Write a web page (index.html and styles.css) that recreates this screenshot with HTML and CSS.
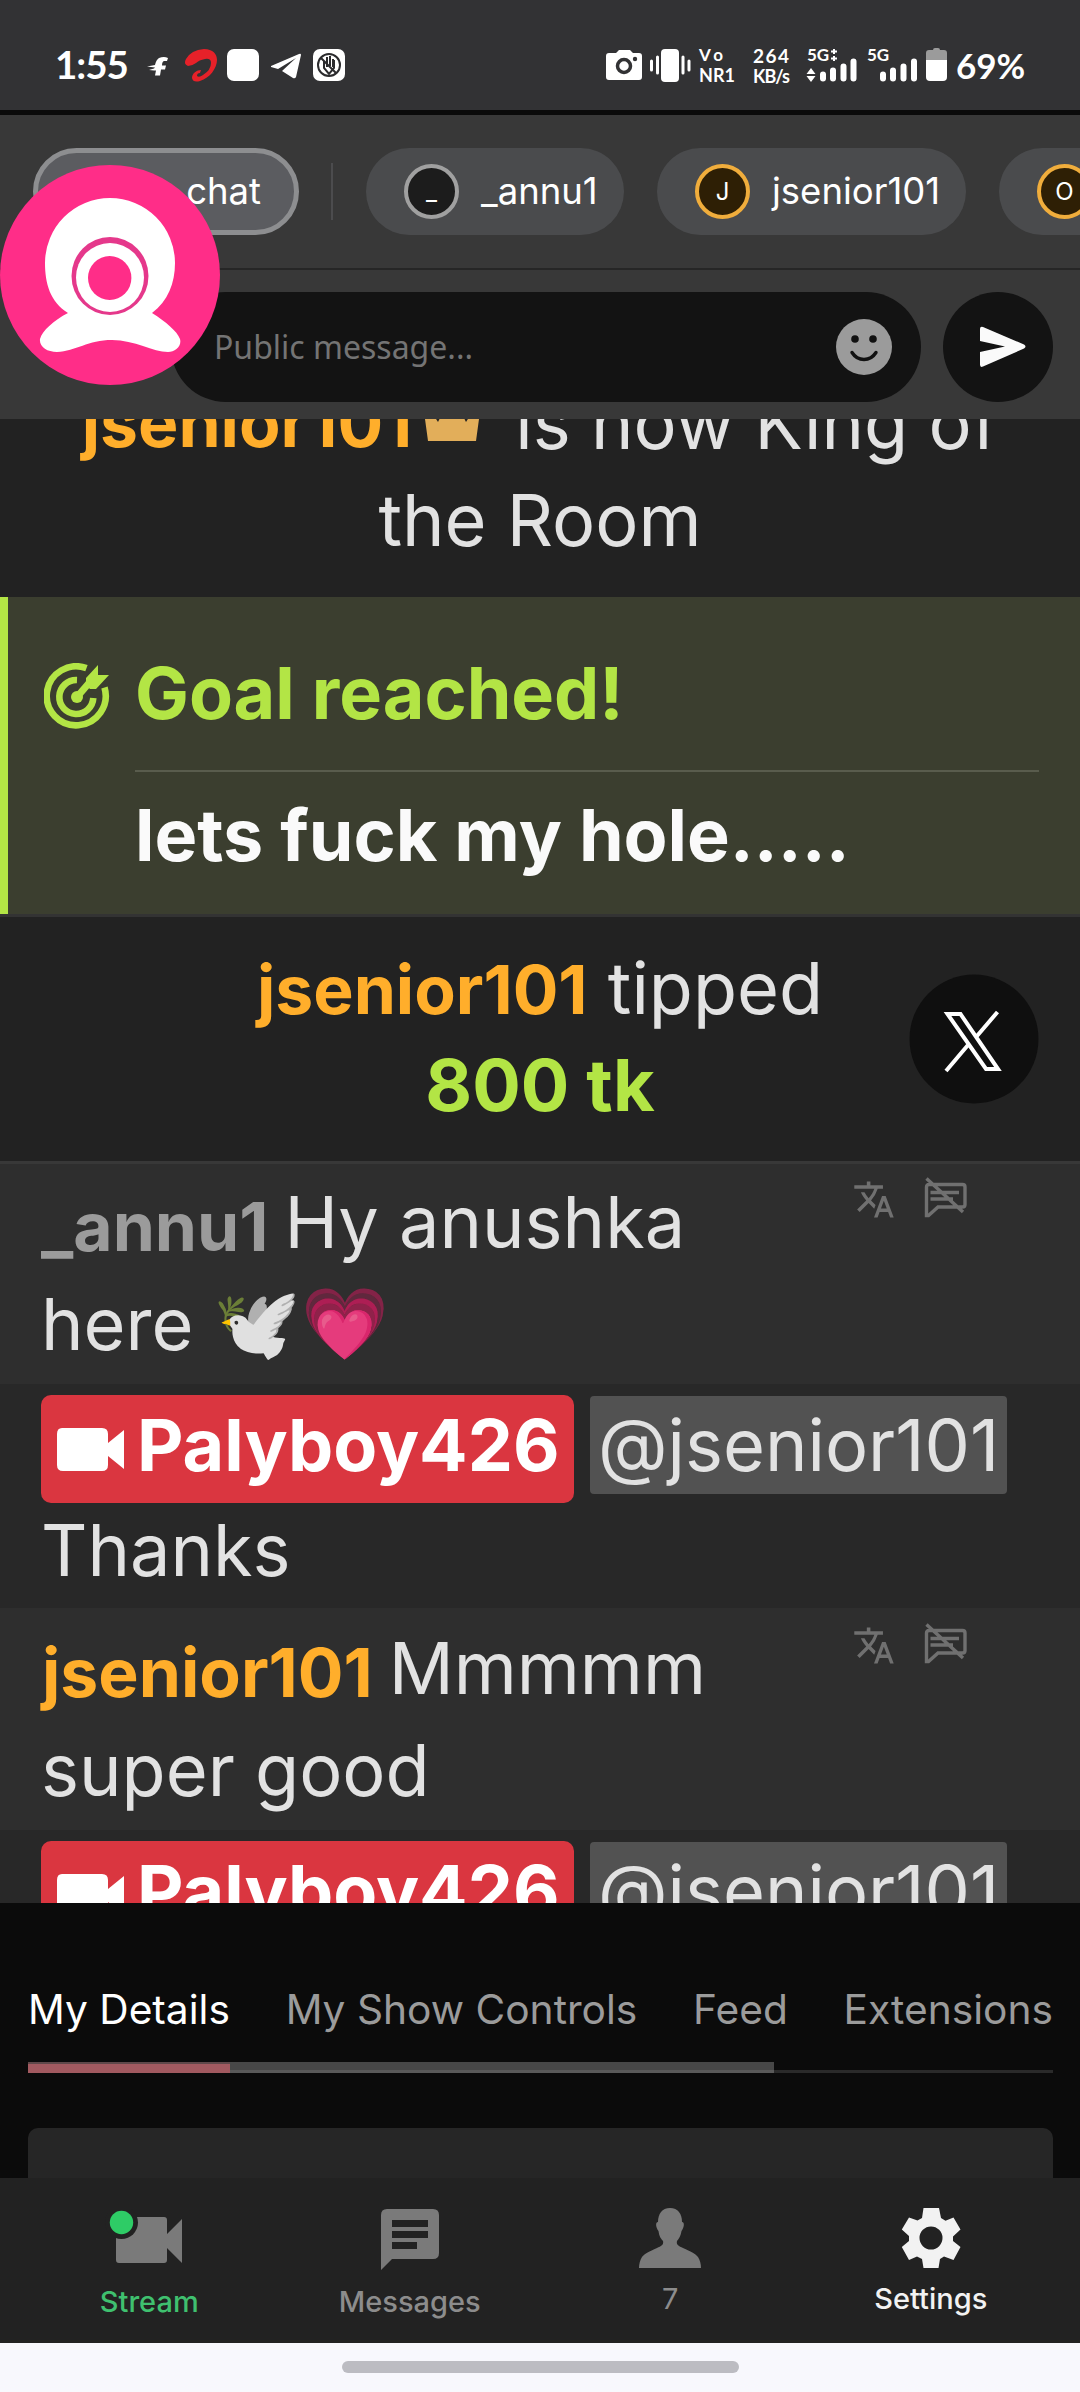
FILE: index.html
```
<!DOCTYPE html>
<html lang="en">
<head>
<meta charset="utf-8">
<title>Room chat</title>
<link rel="stylesheet" href="styles.css">
</head>
<body>
<svg width="0" height="0" class="defs">
  <symbol id="translate" viewBox="0 0 24 24"><path d="M12.87 15.07l-2.54-2.51.03-.03A17.5 17.5 0 0 0 14.07 6H17V4h-7V2H8v2H1v2h11.170C11.500 7.920 10.440 9.750 9 11.350 8.070 10.320 7.300 9.190 6.690 8h-2c.73 1.630 1.730 3.170 2.980 4.560l-5.090 5.020L4 19l5-5 3.110 3.110.76-2.040zM18.500 10h-2L12 22h2l1.120-3h4.750L21 22h2l-4.500-12zm-2.620 7l1.620-4.330L19.120 17h-3.240z"/></symbol>
  <symbol id="mute" viewBox="0 0 44 42"><path d="M3.500 38.500V10q0-2.500 2.500-2.500H39.500q2.500 0 2.500 2.500V27.500q0 2.500-2.500 2.500H15L5.500 38.500zM7.500 15.500H36M7.500 22H30M3.500 1.500L40 35" fill="none" stroke="currentColor" stroke-width="3.400"/></symbol>
  <symbol id="cam" viewBox="0 0 67 43"><path d="M5 0H45q6 0 6 6V15L67 2V41L51 28V37q0 6-6 6H6q-6 0-6-6V6q0-6 5-6z"/></symbol>
</svg>
<div class="screen">
  <div class="status">
    <span class="clock">1:55</span>
    <svg class="apps" width="202" height="40" viewBox="144 46 202 40" fill="#fff">
      <path d="M168 58q-4-2-9 0-3 2-4 7l-8 1.500 8 1-1 1-5 1.500 5 .5h2l-1 5h5l1-6h4l1-4h-4q0-4 2-4.500h3z"/>
      <path d="M188 66q-5-2-2-7 5-9 18-10c9 0 13 5 13 11 0 8-7 18-17 21q-7 2-8-3c0-5 5-8 9-8l-1 3q-3 0-3 3 2 2 6-1 8-5 8-12 0-5-6-4-6 1-9 4-4 3-8 3z" fill="#e62129"/>
      <rect x="227" y="49" width="32" height="32" rx="7"/>
      <path d="M271 66l28-12q2-1 2 1l-5 22q-1 2-3 1l-11-7 14-13-18 11-7-2z"/>
      <rect x="313" y="49" width="32" height="32" rx="7"/>
      <circle cx="329" cy="65" r="11" fill="none" stroke="#2b2b2d" stroke-width="2"/>
      <path d="M324 61v7l5 6 5-6v-8M327 57v10M330 56v10M333 59v8M321 58l15 15" fill="none" stroke="#2b2b2d" stroke-width="2"/>
    </svg>
    <svg class="signals" width="344" height="44" viewBox="606 44 344 44" fill="#fff">
      <path d="M609 53h7l3-3h11l3 3h6q3 0 3 3v21q0 3-3 3h-30q-3 0-3-3V56q0-3 3-3z"/>
      <circle cx="624" cy="66" r="6.500" fill="none" stroke="#323234" stroke-width="3.500"/><circle cx="635" cy="59" r="2.200" fill="#323234"/>
      <rect x="661" y="49" width="18" height="33" rx="4"/>
      <path d="M651.500 61v9M657.500 57v16M683 57v16M689 61v9" stroke="#fff" stroke-width="3" stroke-linecap="round"/>
      <g class="tiny"><text x="699" y="61" font-size="17" textLength="24">Vo</text><text x="699" y="82" font-size="18" textLength="36">NR1</text>
      <text x="753" y="63" font-size="19" textLength="36">264</text><text x="753" y="83" font-size="18" textLength="37">KB/s</text>
      <text x="807" y="61" font-size="17" textLength="22">5G</text><text x="867" y="61" font-size="17" textLength="22">5G</text></g>
      <path d="M834 49v5M831 51.500h6M834 56v5M831 58.500h6" stroke="#fff" stroke-width="2"/>
      <path d="M806.500 74l4.500-6 4.500 6zM806.500 76h9l-4.500 6z"/>
      <path d="M823 74.500v4M833 70.500v8M843.500 66.500v12M853.500 61.500v17M883 74.500v4M893 70.500v8M903.500 66.500v12M914 61.500v17" stroke="#fff" stroke-width="6" stroke-linecap="round"/>
      <path d="M926 60v-7q0-3 3-3h4q0-2 2-2h3q2 0 2 2h4q3 0 3 3v7z" fill="#9b9b9b"/><path d="M926 60h21v17q0 4-4 4h-13q-4 0-4-4z"/>
    </svg>
    <span class="battery">69%</span>
  </div>

  <div class="rooms">
    <div class="chip chip-on">chat</div>
    <div class="sep"></div>
    <div class="chip"><i class="av">_</i>_annu1</div>
    <div class="chip wide"><i class="av gold">J</i>jsenior101</div>
    <div class="chip"><i class="av gold">O</i></div>
  </div>
  <div class="compose">
    <div class="field"><span>Public message...</span>
      <svg width="56" height="56" viewBox="0 0 56 56"><circle cx="28" cy="28" r="28" fill="#9b9b9b"/><circle cx="19" cy="20" r="3.800" fill="#111"/><circle cx="37" cy="20" r="3.800" fill="#111"/><path d="M16 33.500q4.500 7 12 7t12-7" fill="none" stroke="#111" stroke-width="3.400" stroke-linecap="round"/></svg>
    </div>
    <div class="send"><svg width="48" height="42" viewBox="0 0 48 42"><path d="M1 3Q1 0 4 1L45 18.500Q48 20.500 45 22.500L4 40.500Q1 42 1 38.500V26L26 20.500 1 15z" fill="#fafafa"/></svg></div>
  </div>

  <div class="chat">
    <div class="notice king">
      <div class="kline"><b class="name">jsenior101</b><svg width="56" height="52" viewBox="0 0 56 52" fill="#e2ae5a"><path d="M-2 8L14 33 28 5 42 33 58 8 52 52H4z"/></svg><span>is now King of</span></div>
      <div>the Room</div>
    </div>
    <div class="goal">
      <svg width="66" height="68" viewBox="0 0 66 68"><g fill="none" stroke="#b3e545" stroke-width="6.600"><path d="M42.500 5.200A29.500 29.500 0 1 0 60.500 24.500"/><path d="M33 17A17 17 0 1 0 49.300 35"/></g><circle cx="33" cy="34" r="6" fill="#b3e545"/><path d="M33 34L45 20" stroke="#b3e545" stroke-width="7"/><path d="M42 22V15L54 2V12H65L52 26H46z" fill="#b3e545"/></svg>
      <div class="goal-text"><div class="goal-title">Goal reached!</div><div class="goal-body">lets fuck my hole.....</div></div>
    </div>
    <div class="notice tip"><div><b class="name">jsenior101</b> tipped</div><div><b class="tk">800 tk</b></div></div>
    <div class="msg light">
      <div class="line"><b class="name gray">_annu1</b><span>Hy anushka</span></div>
      <div class="line">here <span class="emoji">&#x1F54A;&#xFE0F;&#x1F497;</span></div>
      <div class="tools"><svg width="44" height="43"><use href="#translate"/></svg><svg width="44" height="42"><use href="#mute"/></svg></div>
    </div>
    <div class="msg dark">
      <div class="line tags"><div class="badge"><svg width="67" height="43"><use href="#cam"/></svg>Palyboy426</div><div class="mention">@jsenior101</div></div>
      <div class="line">Thanks</div>
    </div>
    <div class="msg light later">
      <div class="line"><b class="name shift">jsenior101</b><span>Mmmmm</span></div>
      <div class="line">super good</div>
      <div class="tools"><svg width="44" height="43"><use href="#translate"/></svg><svg width="44" height="42"><use href="#mute"/></svg></div>
    </div>
    <div class="msg dark">
      <div class="line tags"><div class="badge"><svg width="67" height="43"><use href="#cam"/></svg>Palyboy426</div><div class="mention">@jsenior101</div></div>
    </div>
  </div>

  <div class="details">
    <div class="tabs"><span class="on">My Details</span><span>My Show Controls</span><span>Feed</span><span>Extensions</span></div>
    <div class="track"><div class="thumb"><div class="active"></div></div></div>
    <div class="card"></div>
  </div>

  <div class="nav">
    <div class="item green"><svg width="96" height="62" viewBox="101 2208 96 62"><path d="M119 2217h45q3 0 3 3v14l15-15v44l-15-15v12q0 3-3 3h-45q-3 0-3-3v-40q0-3 3-3z" fill="#7a7a7a"/><circle cx="121.500" cy="2222.500" r="16.500" fill="#222"/><circle cx="121.500" cy="2222.500" r="11.700" fill="#2ecc66"/></svg><span>Stream</span></div>
    <div class="item"><svg width="58" height="62" viewBox="0 0 58 62" fill="#7a7a7a"><path fill-rule="evenodd" d="M6 1H52q6 0 6 6V45q0 6-6 6H11L0 62V7q0-6 6-6zM11 12v7H47v-7zM11 23v7H47v-7zM11 34v7H36v-7z"/></svg><span>Messages</span></div>
    <div class="item up"><svg width="62" height="62" viewBox="0 1 62 62" fill="#7a7a7a"><path d="M31 1c8 0 12 6 12 14 3 0 2 6-.5 9-1 6-3 8-4.500 10-1 4 2 5 6 7 8 4 12 5 15 9 2 3 3 7 3 11H0c0-4 1-8 3-11 3-4 7-5 15-9 4-2 7-3 6-7-2-2-4-5-4.500-10C17 21 16 15 19 15 19 7 23 1 31 1z"/></svg><span class="thin">7</span></div>
    <div class="item up white"><svg width="60" height="62" viewBox="0 1 60 62" fill="#f2f2f2"><path fill-rule="evenodd" d="M22.500 1h15.500l2 10 4.500 2.800L52.500 10.500 59.500 22.500 52 29.500v4.500L59.500 40 52.500 53 43 49.500 39 52 37.500 61H22.500L21 52l-5-2.500L8 53 .8 40 8 34v-5L.8 22.500 8 10.500 16.500 13.500 21 11zM30 19.500a11.500 11.500 0 1 0 0 23 11.500 11.500 0 1 0 0-23z"/></svg><span>Settings</span></div>
  </div>
  <div class="home"><div class="handle"></div></div>

  <svg class="bubble" width="220" height="220" viewBox="0 165 220 220"><circle cx="110" cy="275" r="110" fill="#ff2d88"/>
    <path d="M68 313C50 302 45 283 45 263a65 65 0 0 1 130 0C175 283 168 301 152 313 166 322 177 331 180 339c2 7-5 13-12 13C153 352 135 340 112 340 88 340 76 351 57 352c-10 0-18-5-17-13C42 331 54 320 68 313z" fill="#fff"/>
    <ellipse cx="110" cy="276" rx="38.500" ry="39" fill="#e5388b"/><ellipse cx="110" cy="277.500" rx="34" ry="34.500" fill="#fff"/><ellipse cx="109.700" cy="278" rx="21.700" ry="22" fill="#ff2d88"/></svg>
  <svg class="xbtn" width="130" height="130" viewBox="0 0 130 130"><circle cx="65" cy="65" r="64.500" fill="#0f0f0f"/><path d="M38.500 40H51.500L89 95H77zM88.500 38L68 62M37 97L59 71" fill="none" stroke="#fff" stroke-width="4"/></svg>
</div>
</body>
</html>
```
FILE: styles.css
```
* { box-sizing: border-box; }
body { margin: 0; font-family: Inter, sans-serif; background: #222; }
.defs { position: absolute; }
svg { display: block; flex: none; }
.screen { position: relative; width: 1080px; height: 2392px; overflow: hidden; display: flex; flex-direction: column; color: #e2e2e2; }
.screen > div { flex: none; }

.status { height: 115px; background: #323234; border-bottom: 5px solid #0a0a0a; display: flex; padding-left: 55px; color: #fff; font-family: Lato, sans-serif; font-weight: 700; }
.clock { width: 89px; font-size: 38.500px; line-height: 129px; letter-spacing: -1px; }
.apps { margin-top: 46px; }
.signals { margin: 44px 6px 0 260px; }
.battery { font-size: 35px; line-height: 131px; }
.tiny { font-family: Lato, sans-serif; font-weight: 700; }

.rooms { height: 155px; background: #383838; border-bottom: 2px solid #262626; padding: 33px 0 0 33px; display: flex; overflow: hidden; }
.chip { width: 258px; height: 87px; border-radius: 44px; background: #4a4b4d; color: #fff; font-size: 36.500px; line-height: 87px; flex: none; display: flex; align-items: center; padding: 0 0 0 38px; margin-right: 33px; }
.chip-on { width: 266px; background: #5b5c60; border: 5px solid #8d8e90; justify-content: flex-end; padding-right: 33px; }
.wide { width: 309px; }
.sep { flex: none; width: 2px; height: 57px; background: #4c4c4e; margin: 15px 33px 0 -1px; }
.av { width: 55px; height: 55px; border: 4px solid #a0a0a0; border-radius: 50%; background: #1c1c1c; font: 24px/48px Inter, sans-serif; text-align: center; margin-right: 22px; }
.gold { border-color: #f0ad3c; background: #2e1f05; }

.compose { height: 149px; background: #383838; display: flex; padding: 22px 27px 0 171px; gap: 22px; }
.field { width: 750px; height: 110px; border-radius: 55px; background: #131313; display: flex; align-items: center; justify-content: space-between; padding: 0 29px 0 43px; font: 32px/110px "Noto Sans", sans-serif; color: #747474; }
.send { width: 110px; height: 110px; border-radius: 50%; background: #131313; display: flex; align-items: center; padding-left: 36px; }

.chat { height: 1484px; overflow: hidden; font-size: 72px; line-height: 97px; }
.name { font-size: 67.800px; color: #ffae2b; font-weight: 700; line-height: 1; }
.gray { color: #9b9b9b; }
.notice { background: #222; text-align: center; }
.king { margin-top: -45px; height: 223px; }
.kline { display: flex; height: 97px; justify-content: center; }
.kline .name { line-height: 97px; }
.kline svg { margin: 15px 35px 0 12px; }
.goal { height: 320px; background: #3b3e2f; border-bottom: 3px solid #333; display: flex; padding: 47px 41px 0 44px; box-shadow: inset 8px 0 #b3e545; }
.goal > svg { margin-top: 19px; }
.goal-text { flex: 1; margin-left: 25px; font-weight: 700; }
.goal-title { color: #b3e545; padding-bottom: 29px; border-bottom: 2px solid #595c4d; font-size: 71.800px; }
.goal-body { color: #fafafa; padding-top: 14px; font-size: 71.800px; }
.tip { height: 247px; padding-top: 22px; border-bottom: 3px solid #383838; }
.tk { color: #b3e545; }
.msg { position: relative; padding: 7px 41px 0; }
.light { background: #2e2e2e; height: 220px; }
.later { height: 222px; padding-top: 9px; }
.dark { background: #282828; height: 224px; padding-top: 11px; }
.line { display: flex; height: 102px; line-height: 102px; font-size: 72px; white-space: pre; }
.line .name { line-height: 111px; margin-right: 16px; }
.shift { padding-left: 1px; }
.emoji { font-family: "Noto Color Emoji", sans-serif; font-size: 70.500px; }
.tools { position: absolute; top: 13px; left: 852px; display: flex; gap: 27px; color: #707070; fill: #707070; }
.tools svg:first-child { margin-top: 1px; }
.later .tools { top: 15px; }
.tags { height: 104px; gap: 16px; align-items: flex-start; }
.badge { display: flex; width: 533px; height: 108px; line-height: 100px; border-radius: 10px; background: #da3640; color: #fff; fill: #fff; font-weight: 700; font-size: 71.800px; padding-left: 16px; gap: 13px; }
.badge svg { margin-top: 33px; }
.mention { width: 417px; height: 98px; line-height: 98px; margin-top: 1px; padding-left: 8px; border-radius: 4px; background: #525252; }

.details { height: 275px; background: #0b0b0b; padding: 82px 27px 0 28px; }
.tabs { display: flex; justify-content: space-between; font-size: 40.700px; line-height: 50px; color: #9b9b9b; white-space: nowrap; }
.tabs .on { color: #fff; }
.track { margin-top: 27px; height: 11px; border-bottom: 3px solid #2a2a2a; }
.thumb { width: 746px; height: 11px; background: #474747; border-bottom: 3px solid #5a5a5a; }
.active { width: 202px; height: 11px; background: #a25a60; border-top: 2px solid #5f484a; }
.card { height: 50px; margin-top: 55px; background: #262626; border-radius: 10px 10px 0 0; }

.nav { height: 165px; background: #222; display: flex; padding: 30px 19px 0; }
.item { flex: 1; display: flex; flex-direction: column; align-items: center; font-size: 29px; font-weight: 500; color: #8c8c8c; line-height: 36px; }
.item span { margin-top: 14px; }
.item.up span { margin-top: 11px; }
.item .thin { font-weight: 400; }
.green { color: #3fc06f; }
.white { color: #f2f2f2; }
.home { height: 49px; background: #f8f8fd; display: flex; justify-content: center; padding-top: 18px; }
.handle { width: 397px; height: 12px; border-radius: 6px; background: #bcbcc2; }

.bubble { position: absolute; left: 0; top: 165px; }
.xbtn { position: absolute; left: 909px; top: 974px; }
```
